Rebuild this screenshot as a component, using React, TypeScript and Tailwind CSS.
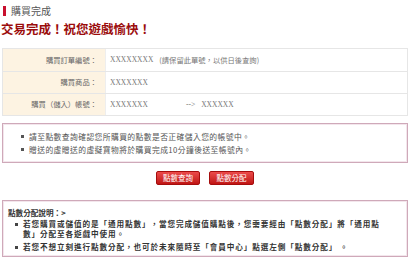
import React from 'react'

const rows = [
    { label: '購買訂單編號：', value: 'XXXXXXXX', note: '(請保留此單號，以供日後查詢)' },
    { label: '購買商品：', value: 'XXXXXXX' },
    { label: '購買（儲入）帳號：', value: 'XXXXXXX', to: 'XXXXXX' },
]

export default function App() {
    return (
        <div className="w-[410px] h-[264px] overflow-hidden bg-white font-['Noto_Sans_CJK_TC',sans-serif] text-[#666]">
            {/* header */}
            <div className="flex items-center gap-[5px] pl-[3px] pt-[5px]">
                <span className="w-[3px] h-[10px] bg-[#c8102e]" />
                <span className="text-[10px] leading-[12px] text-[#555]">購買完成</span>
            </div>
            <h1 className="mt-[4px] pl-[1px] text-[12.5px] leading-[15px] font-bold text-[#9b0c0c]">
                交易完成！祝您遊戲愉快！
            </h1>

            {/* order table */}
            <div className="mt-[12px] mx-[2px] border border-[#e6e6e6]">
                {rows.map((r, i) => (
                    <div key={i} className={"grid grid-cols-[102px_1fr] h-[22px] " + (i > 0 ? 'border-t border-[#e6e6e6]' : '')}>
                        <div className="bg-[#fdf3e2] flex items-center justify-end pr-[8px] text-[7.3px] text-[#666]">
                            {r.label}
                        </div>
                        <div className="flex items-center pl-[4px] border-l border-[#eee] text-[7.3px]">
                            <span className="font-['Liberation_Serif',serif] text-[7.5px] text-[#777]">{r.value}</span>
                            {r.note && <span className="ml-[6px] text-[#777]">{r.note}</span>}
                            {r.to && (
                                <>
                                    <span className="ml-[38px] font-['Liberation_Serif',serif] text-[7.5px] text-[#777]">--&gt;</span>
                                    <span className="ml-[6px] font-['Liberation_Serif',serif] text-[7.5px] text-[#777]">{r.to}</span>
                                </>
                            )}
                        </div>
                    </div>
                ))}
            </div>

            {/* notice */}
            <div className="mt-[7px] mx-[2px] h-[40px] border border-[#cfa9b9] shadow-[inset_0_0_0_1px_#f3e6ec] flex flex-col justify-center gap-[3px] pl-[18px] text-[7.8px] leading-[10px] text-[#555] tracking-[0.4px]">
                <div className="flex items-center gap-[5px]"><span className="w-[3px] h-[3px] bg-[#555]" />請至點數查詢確認您所購買的點數是否正確儲入您的帳號中。</div>
                <div className="flex items-center gap-[5px]"><span className="w-[3px] h-[3px] bg-[#555]" />贈送的虛贈送的虛擬寶物將於購買完成10分鐘後送至帳號內。</div>
            </div>

            {/* buttons */}
            <div className="mt-[8px] flex justify-center gap-[9px]">
                <button className="w-[44px] h-[14px] rounded-[2px] border border-[#a50d0d] bg-gradient-to-b from-[#ec4a4a] to-[#c01212] text-white text-[7.5px] leading-[12px]">點數查詢</button>
                <button className="w-[45px] h-[14px] rounded-[2px] border border-[#a50d0d] bg-gradient-to-b from-[#ec4a4a] to-[#c01212] text-white text-[7.5px] leading-[12px]">點數分配</button>
            </div>

            {/* distribution notes */}
            <div className="mt-[15px] mx-[2px] h-[57px] border border-[#cfa9b9] shadow-[inset_0_0_0_1px_#f3e6ec] pt-[7px] pl-[5px] pr-[4px] text-[7.6px] leading-[9px] text-[#333] font-semibold">
                <div>點數分配說明：&gt;</div>
                <ul className="mt-[2px] pl-[15px]">
                    <li className="relative tracking-[0.9px] leading-[10px] whitespace-nowrap">
                        <span className="absolute -left-[8px] top-[4px] w-[3px] h-[3px] bg-[#444]" />
                        若您購買或儲值的是「通用點數」，當您完成儲值購點後，您需要經由「點數分配」將「通用點
                        <br />
                        數」分配至各遊戲中使用。
                    </li>
                    <li className="relative mt-[3px] tracking-[0.9px] leading-[10px]">
                        <span className="absolute -left-[8px] top-[4px] w-[3px] h-[3px] bg-[#444]" />
                        若您不想立刻進行點數分配，也可於未來隨時至「會員中心」點選左側「點數分配」 。
                    </li>
                </ul>
            </div>
        </div>
    )
}
